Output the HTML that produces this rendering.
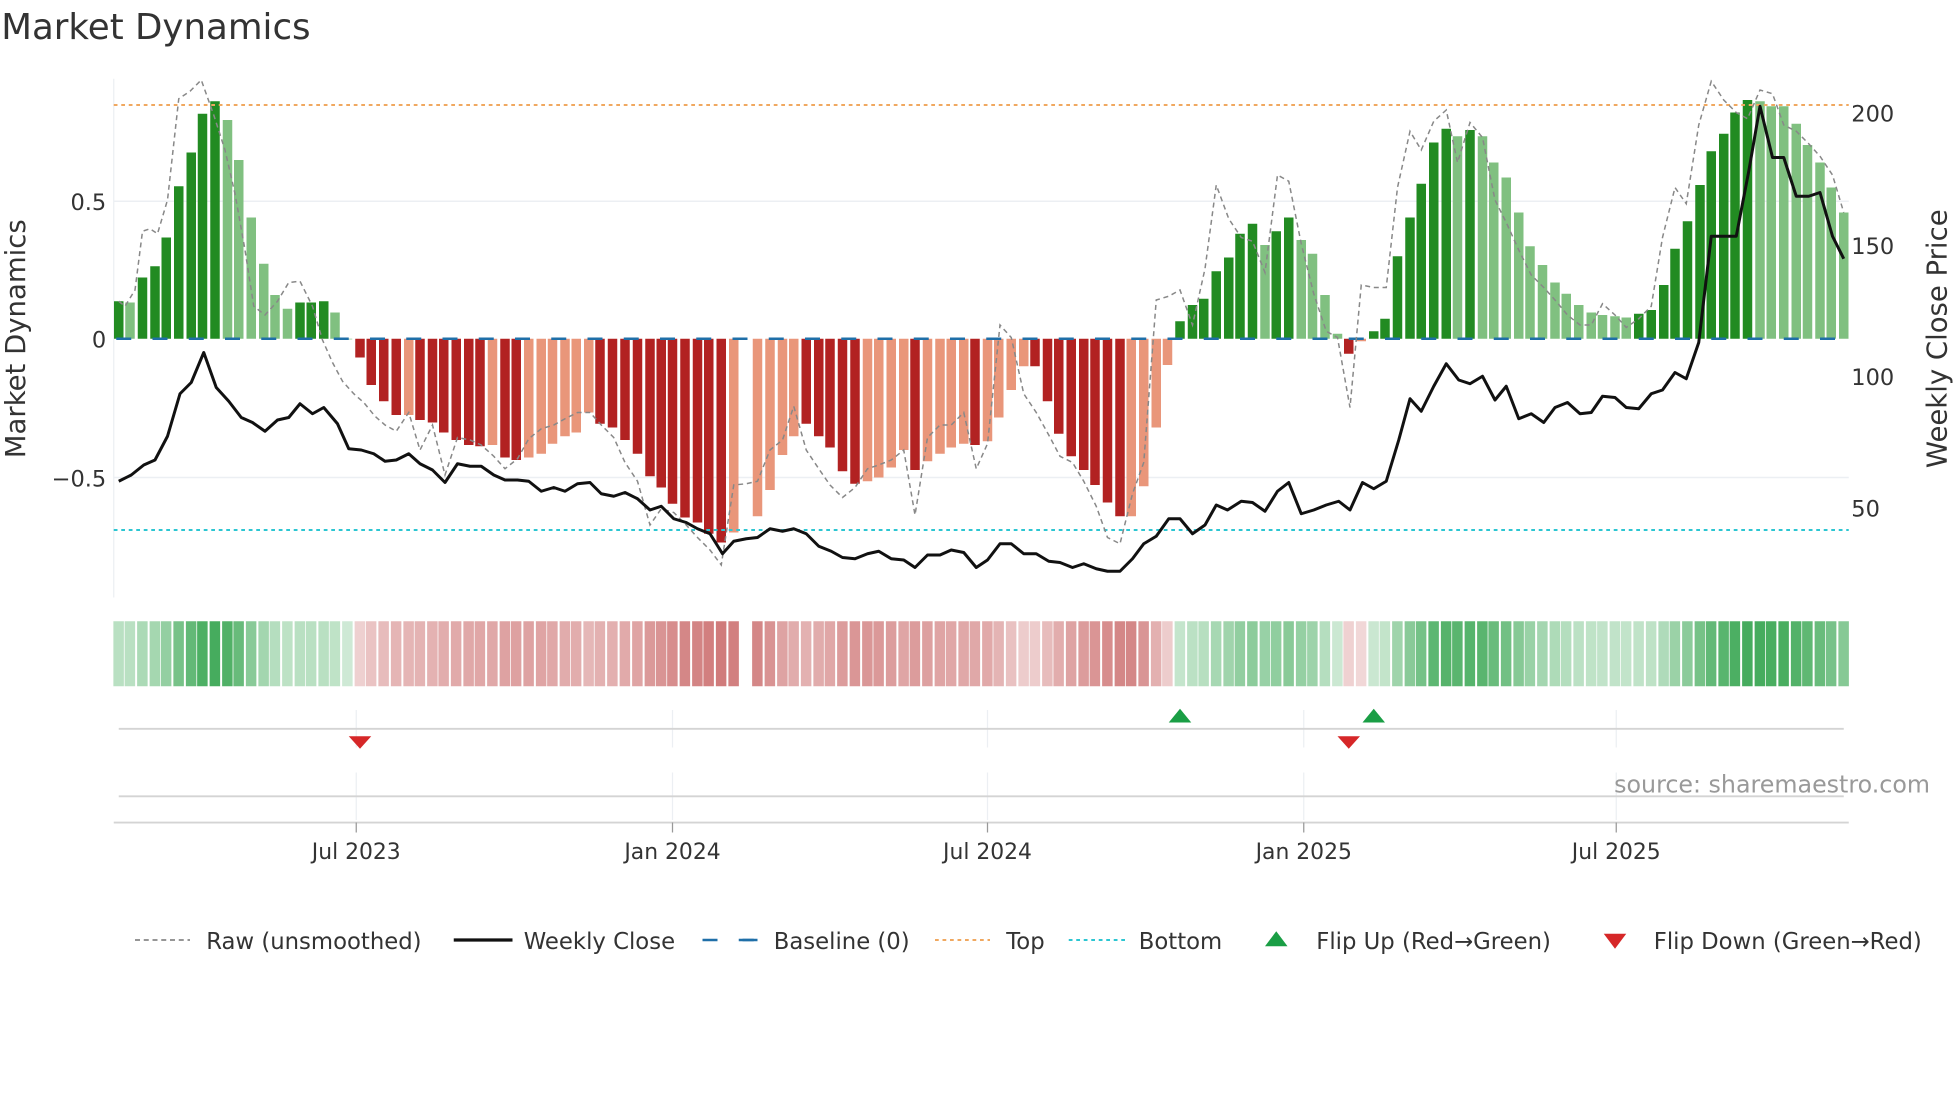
<!DOCTYPE html>
<html><head><meta charset="utf-8"><style>
html,body{margin:0;padding:0;background:#fff;}
svg{display:block;font-family:"DejaVu Sans","Liberation Sans",sans-serif;}
</style></head><body>
<svg id="s" width="1960" height="1102" viewBox="0 0 1568 881.6" preserveAspectRatio="none" xmlns="http://www.w3.org/2000/svg">
<text x="1" y="31" font-size="28.5" fill="#333">Market Dynamics</text>
<line x1="91" y1="161" x2="1479" y2="161" stroke="#eceff3" stroke-width="1.2"/>
<line x1="91" y1="382" x2="1479" y2="382" stroke="#eceff3" stroke-width="1.2"/>
<line x1="91" y1="63" x2="91" y2="478" stroke="#eceff3" stroke-width="1"/>
<g id="bars"></g>
<line x1="91" y1="84" x2="1479" y2="84" stroke="#f0a860" stroke-width="1.6" stroke-dasharray="3,3"/>
<line x1="91" y1="424" x2="1479" y2="424" stroke="#2cc6d2" stroke-width="1.6" stroke-dasharray="3,3"/>
<line x1="91" y1="271" x2="1479" y2="271" stroke="#1f6fa8" stroke-width="2" stroke-dasharray="12,17" stroke-dashoffset="-2"/>
<polyline id="raw" fill="none" stroke="#888" stroke-width="1.2" stroke-dasharray="4,3"/>
<polyline id="close" fill="none" stroke="#111" stroke-width="2.4" stroke-linejoin="round"/>
<g font-size="18" fill="#333">
<text x="85" y="168" text-anchor="end">0.5</text>
<text x="85" y="278" text-anchor="end">0</text>
<text x="85" y="389" text-anchor="end">−0.5</text>
<text x="1481" y="97">200</text>
<text x="1481" y="203">150</text>
<text x="1481" y="308">100</text>
<text x="1481" y="413">50</text>
</g>
<text transform="translate(20,271) rotate(-90)" text-anchor="middle" font-size="22" fill="#333">Market Dynamics</text>
<text transform="translate(1557,271) rotate(-90)" text-anchor="middle" font-size="22" fill="#333">Weekly Close Price</text>
<g id="strip"></g>
<g stroke="#eceff3" stroke-width="1">
<line x1="285" y1="568" x2="285" y2="598"/><line x1="538" y1="568" x2="538" y2="598"/><line x1="790" y1="568" x2="790" y2="598"/><line x1="1043" y1="568" x2="1043" y2="598"/><line x1="1293" y1="568" x2="1293" y2="598"/>
<line x1="285" y1="618" x2="285" y2="656"/><line x1="538" y1="618" x2="538" y2="656"/><line x1="790" y1="618" x2="790" y2="656"/><line x1="1043" y1="618" x2="1043" y2="656"/><line x1="1293" y1="618" x2="1293" y2="656"/>
</g>
<line x1="95" y1="583" x2="1475" y2="583" stroke="#d4d4d4" stroke-width="1.5"/>
<line x1="95" y1="637" x2="1475" y2="637" stroke="#d4d4d4" stroke-width="1.5"/>
<line x1="91" y1="658" x2="1479" y2="658" stroke="#d4d4d4" stroke-width="1.5"/>
<g stroke="#999" stroke-width="1"><line x1="285" y1="658" x2="285" y2="666"/><line x1="538" y1="658" x2="538" y2="666"/><line x1="790" y1="658" x2="790" y2="666"/><line x1="1043" y1="658" x2="1043" y2="666"/><line x1="1293" y1="658" x2="1293" y2="666"/></g>
<polygon points="279,589 297,589 288,599" fill="#d62728"/>
<polygon points="1070,589 1088,589 1079,599" fill="#d62728"/>
<polygon points="935,578 953,578 944,567" fill="#1a9e45"/>
<polygon points="1090,578 1108,578 1099,567" fill="#1a9e45"/>
<text x="1544" y="634" text-anchor="end" font-size="19" fill="#999">source: sharemaestro.com</text>
<g font-size="17.5" fill="#333" text-anchor="middle">
<text x="285" y="687">Jul 2023</text><text x="538" y="687">Jan 2024</text><text x="790" y="687">Jul 2024</text><text x="1043" y="687">Jan 2025</text><text x="1293" y="687">Jul 2025</text>
</g>
<g font-size="18.2" fill="#333">
<line x1="108" y1="752" x2="152" y2="752" stroke="#888" stroke-width="1.4" stroke-dasharray="4,3"/><text x="165" y="759">Raw (unsmoothed)</text>
<line x1="363" y1="752" x2="410" y2="752" stroke="#111" stroke-width="2.6"/><text x="419" y="759">Weekly Close</text>
<line x1="562" y1="752" x2="606" y2="752" stroke="#1f6fa8" stroke-width="2" stroke-dasharray="12,17"/><line x1="594" y1="752" x2="606" y2="752" stroke="#1f6fa8" stroke-width="2"/><text x="619" y="759">Baseline (0)</text>
<line x1="748" y1="752" x2="792" y2="752" stroke="#f0a860" stroke-width="1.6" stroke-dasharray="3,3"/><text x="805" y="759">Top</text>
<line x1="855" y1="752" x2="900" y2="752" stroke="#2cc6d2" stroke-width="1.6" stroke-dasharray="3,3"/><text x="911" y="759">Bottom</text>
<polygon points="1012,757 1030,757 1021,745" fill="#1a9e45"/><text x="1053" y="759">Flip Up (Red→Green)</text>
<polygon points="1283,747 1301,747 1292,759" fill="#d62728"/><text x="1323" y="759">Flip Down (Green→Red)</text>
</g>
</svg>
<script>
var B=[[95,241,'D'],[104,242,'L'],[114,222,'D'],[124,213,'D'],[133,190,'D'],[143,149,'D'],[153,122,'D'],[162,91,'D'],[172,81,'D'],[182,96,'L'],[191,128,'L'],[201,174,'L'],[211,211,'L'],[220,236,'L'],[230,247,'L'],[240,242,'D'],[249,242,'D'],[259,241,'D'],[268,250,'L'],[278,271,'L'],
[288,286,'d'],[297,308,'d'],[307,321,'d'],[317,332,'d'],[327,332,'l'],[336,336,'d'],[346,338,'d'],[355,346,'d'],[365,352,'d'],[375,356,'d'],[384,357,'d'],[394,356,'l'],[404,366,'d'],[413,368,'d'],[423,366,'l'],[433,363,'l'],[442,355,'l'],[452,349,'l'],[461,346,'l'],[471,330,'l'],[480,339,'d'],[490,342,'d'],[500,352,'d'],[510,363,'d'],[520,381,'d'],[529,390,'d'],[538,403,'d'],[548,414,'d'],[558,418,'d'],[567,427,'d'],[577,434,'d'],[587,426,'l'],[597,271,'g'],[606,413,'l'],[616,392,'l'],[626,364,'l'],[635,349,'l'],[645,339,'d'],[655,349,'d'],[664,358,'d'],[674,377,'d'],[684,387,'d'],[694,385,'l'],[703,382,'l'],[713,374,'l'],[723,360,'l'],[732,376,'d'],[742,369,'l'],[752,363,'l'],[761,358,'l'],[771,355,'l'],[780,356,'d'],
[790,353,'l'],[799,334,'l'],[809,312,'l'],[819,293,'l'],[828,293,'d'],[838,321,'d'],[847,347,'d'],[857,365,'d'],[867,376,'d'],[876,388,'d'],[886,402,'d'],[896,413,'d'],[905,413,'l'],[915,389,'l'],[925,342,'l'],[934,292,'l'],
[944,257,'D'],[954,244,'D'],[963,239,'D'],[973,217,'D'],[983,206,'D'],[992,187,'D'],[1002,179,'D'],[1012,196,'L'],[1021,185,'D'],[1031,174,'D'],[1041,192,'L'],[1050,203,'L'],[1060,236,'L'],[1070,267,'L'],[1079,283,'d'],[1089,273,'l'],[1099,265,'D'],[1108,255,'D'],[1118,205,'D'],[1128,174,'D'],[1137,147,'D'],[1147,114,'D'],[1157,103,'D'],[1166,109,'L'],[1176,104,'D'],[1186,109,'L'],[1195,130,'L'],[1205,142,'L'],[1215,170,'L'],[1224,197,'L'],[1234,212,'L'],[1244,226,'L'],[1253,235,'L'],[1263,244,'L'],[1273,250,'L'],[1282,252,'L'],[1292,253,'L'],[1301,254,'L'],[1311,251,'D'],[1321,248,'D'],[1331,228,'D'],[1340,199,'D'],[1350,177,'D'],[1360,148,'D'],[1369,121,'D'],[1379,107,'D'],[1388,90,'D'],[1398,80,'D'],[1408,81,'L'],[1417,85,'L'],[1427,85,'L'],[1437,99,'L'],[1446,116,'L'],[1456,130,'L'],[1465,150,'L'],[1475,170,'L']];
var C={D:'#228b22',L:'#80c080',d:'#b22222',l:'#e9967a'};
var h='',st='';
B.forEach(function(b){var x=b[0],y=b[1],t=b[2];
 if(t!=='g'){var y0=Math.min(y,271),hh=Math.abs(y-271);h+='<rect x="'+(x-3.8)+'" y="'+y0+'" width="7.6" height="'+Math.max(hh,0.5)+'" fill="'+C[t]+'"/>';
 var v=Math.abs(y-271)/190;v=Math.min(1,v);var green=(t=='D'||t=='L');
 var a=0.25+0.7*v;
 var base=green?[60,168,85]:[200,100,100];
 var c=base.map(function(k){return Math.round(255-(255-k)*a);});
 st+='<rect x="'+(x-4.3)+'" y="497" width="8.4" height="52" fill="rgb('+c.join(',')+')"/>';}
});
document.getElementById('bars').innerHTML=h;document.getElementById('strip').innerHTML=st;
document.getElementById('close').setAttribute('points',"95,385 105,380 115,372 124,368 134,349 144,315 153,306 163,282 173,310 183,321 193,334 202,338 212,345 222,336 231,334 240,323 250,331 259,326 270,339 279,359 289,360 299,363 308,369 317,368 327,363 336,371 346,376 356,386 366,371 376,373 385,373 395,380 404,384 414,384 423,385 433,393 443,390 452,393 462,387 472,386 481,395 491,397 500,394 510,399 520,408 529,405 539,415 549,418 558,423 568,427 578,443 587,433 597,431 606,430 616,423 626,425 635,423 645,427 655,437 665,441 674,446 684,447 694,443 703,441 713,447 723,448 732,454 742,444 752,444 761,440 771,442 781,454 790,448 800,435 809,435 819,443 829,443 839,449 848,450 858,454 867,451 877,455 886,457 896,457 906,447 915,435 925,429 935,415 944,415 954,427 964,420 973,404 982,408 993,401 1002,402 1012,409 1022,393 1031,386 1041,411 1051,408 1061,404 1071,401 1080,408 1090,386 1099,391 1109,385 1119,352 1128,319 1137,329 1147,309 1157,291 1167,304 1176,307 1186,301 1196,320 1205,309 1215,335 1225,331 1235,338 1244,326 1254,322 1264,331 1273,330 1282,317 1292,318 1301,326 1311,327 1321,315 1330,312 1340,298 1349,303 1359,274 1369,189 1379,189 1389,189 1399,137 1408,85 1418,126 1427,126 1437,157 1447,157 1456,154 1466,189 1475,207");
document.getElementById('raw').setAttribute('points',"95,241 100,245 108,232 114,185 120,183 126,187 134,160 143,79 152,73 161,64 171,92 180,120 188,155 196,200 203,245 212,252 222,241 231,226 240,225 250,245 258,272 266,290 274,305 283,315 291,322 300,333 308,340 317,345 327,330 336,360 346,340 356,380 366,350 376,352 385,356 395,365 404,375 414,367 423,351 433,343 443,340 452,335 462,330 472,330 481,340 491,350 500,370 510,385 520,420 529,407 539,410 549,420 558,430 568,440 577,452 587,388 597,387 606,385 616,360 626,352 635,325 645,360 655,375 664,388 674,398 684,390 694,375 703,372 713,368 723,360 732,412 742,350 752,340 761,340 771,330 781,375 790,355 800,260 809,270 819,315 829,330 839,348 848,365 858,370 867,385 877,405 886,430 896,435 906,395 915,370 925,240 935,237 944,232 954,260 964,215 973,148 983,175 993,190 1002,193 1012,218 1022,140 1031,145 1041,195 1051,235 1061,265 1070,270 1080,326 1089,228 1099,230 1109,230 1118,150 1128,105 1137,120 1147,97 1157,88 1166,130 1176,98 1186,110 1196,160 1205,178 1215,200 1225,220 1235,230 1244,240 1254,252 1264,260 1273,260 1282,243 1292,252 1301,262 1311,255 1321,245 1330,190 1340,150 1349,163 1359,100 1369,65 1379,80 1389,90 1398,95 1408,72 1418,75 1427,100 1437,105 1447,115 1456,125 1466,140 1475,170");
</script>
</body></html>
